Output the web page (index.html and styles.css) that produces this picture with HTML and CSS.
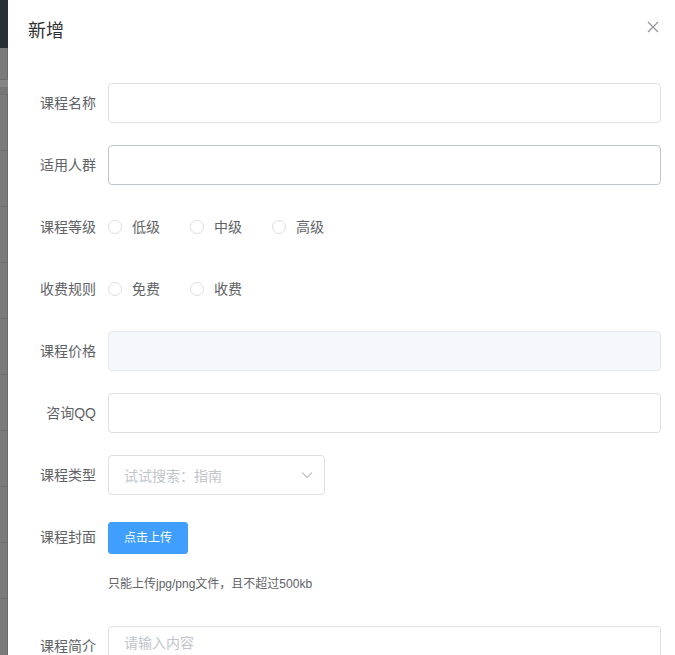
FILE: index.html
```html
<!DOCTYPE html>
<html lang="zh-CN">
<head>
<meta charset="utf-8">
<title>新增</title>
<link rel="stylesheet" href="styles.css">
</head>
<body>
<div class="backdrop">
  <div class="bd-head"></div>
  <div class="bd-row bd-r1"></div>
  <div class="bd-row bd-r2"></div>
  <div class="bd-row bd-r3"></div>
  <div class="bd-row"></div>
  <div class="bd-row"></div>
  <div class="bd-row"></div>
  <div class="bd-row"></div>
  <div class="bd-row"></div>
  <div class="bd-row"></div>
  <div class="bd-row"></div>
  <div class="bd-row"></div>
  <div class="bd-row"></div>
</div>
<div class="dialog">
  <div class="dialog-header">
    <span class="dialog-title">新增</span>
    <button class="dialog-close" aria-label="Close">
      <svg width="16" height="16" viewBox="0 0 16 16"><path d="M3 3 L13 13 M13 3 L3 13" stroke="#909399" stroke-width="1.2" fill="none"/></svg>
    </button>
  </div>
  <div class="dialog-body">
    <form class="form">
      <div class="form-item">
        <label class="form-label">课程名称</label>
        <div class="form-content"><div class="input"></div></div>
      </div>
      <div class="form-item">
        <label class="form-label">适用人群</label>
        <div class="form-content"><div class="input input-hover"></div></div>
      </div>
      <div class="form-item">
        <label class="form-label">课程等级</label>
        <div class="form-content radios">
          <span class="radio"><span class="radio-dot"></span><span class="radio-label">低级</span></span>
          <span class="radio"><span class="radio-dot"></span><span class="radio-label">中级</span></span>
          <span class="radio"><span class="radio-dot"></span><span class="radio-label">高级</span></span>
        </div>
      </div>
      <div class="form-item">
        <label class="form-label">收费规则</label>
        <div class="form-content radios">
          <span class="radio"><span class="radio-dot"></span><span class="radio-label">免费</span></span>
          <span class="radio"><span class="radio-dot"></span><span class="radio-label">收费</span></span>
        </div>
      </div>
      <div class="form-item">
        <label class="form-label">课程价格</label>
        <div class="form-content"><div class="input input-disabled"></div></div>
      </div>
      <div class="form-item">
        <label class="form-label">咨询QQ</label>
        <div class="form-content"><div class="input"></div></div>
      </div>
      <div class="form-item">
        <label class="form-label">课程类型</label>
        <div class="form-content">
          <div class="select">
            <span class="placeholder">试试搜索：指南</span>
            <svg class="select-arrow" width="12" height="8" viewBox="0 0 12 8"><path d="M1 1.5 L6 6.5 L11 1.5" stroke="#c0c4cc" stroke-width="1.2" fill="none"/></svg>
          </div>
        </div>
      </div>
      <div class="form-item">
        <label class="form-label">课程封面</label>
        <div class="form-content">
          <div class="upload-row"><span class="btn-primary">点击上传</span></div>
          <div class="upload-tip">只能上传jpg/png文件，且不超过500kb</div>
        </div>
      </div>
      <div class="form-item">
        <label class="form-label">课程简介</label>
        <div class="form-content"><div class="textarea"><span class="placeholder">请输入内容</span></div></div>
      </div>
    </form>
  </div>
</div>
</body>
</html>
```

FILE: styles.css
```css
html, body {
  margin: 0;
  padding: 0;
  height: 100%;
  overflow: hidden;
}
body {
  display: flex;
  align-items: flex-start;
  background: #7b7b7b;
  font-family: "Liberation Sans", "Noto Sans CJK SC", sans-serif;
  color: #606266;
}
.backdrop {
  width: 8px;
  flex: none;
  height: 655px;
  overflow: hidden;
  background: #7b7b7b;
  box-shadow: inset -1px 0 0 #6a6a6a;
}
.bd-head {
  height: 48px;
  background: #2a2e35;
}
.bd-row {
  height: 55px;
  border-bottom: 1px solid #6e6e6e;
}
.bd-r1 {
  height: 31px;
}
.bd-r2 {
  height: 7px;
  background: #858585;
  border-bottom: none;
}
.bd-r3 {
  height: 7px;
  background: #767676;
}
.dialog {
  flex: none;
  width: 673px;
  height: 656px;
  overflow: hidden;
  margin-top: -1px;
  background: #fff;
  position: relative;
}
.dialog-header {
  padding: 20px 20px 10px;
}
.dialog-title {
  font-size: 18px;
  line-height: 24px;
  color: #303133;
}
.dialog-close {
  position: absolute;
  top: 20px;
  right: 20px;
  width: 16px;
  height: 16px;
  padding: 0;
  border: none;
  background: transparent;
}
.dialog-close svg {
  display: block;
}
.dialog-body {
  padding: 30px 20px 0;
}
.form-item {
  display: flex;
  margin-bottom: 22px;
}
.form-label {
  width: 80px;
  flex: none;
  box-sizing: border-box;
  padding-right: 12px;
  text-align: right;
  font-size: 14px;
  line-height: 40px;
  color: #606266;
}
.form-content {
  flex: 1;
  min-width: 0;
}
.input {
  height: 40px;
  box-sizing: border-box;
  border: 1px solid #dcdfe6;
  border-radius: 4px;
  background: #fff;
}
.input-hover {
  border-color: #c0c4cc;
}
.input-disabled {
  background: #f5f7fa;
  border-color: #e4e7ed;
}
.radios {
  display: flex;
  align-items: center;
  height: 40px;
}
.radio {
  display: inline-flex;
  align-items: center;
  margin-right: 30px;
}
.radio-dot {
  width: 14px;
  height: 14px;
  box-sizing: border-box;
  border: 1px solid #dcdfe6;
  border-radius: 50%;
  background: #fff;
}
.radio-label {
  padding-left: 10px;
  font-size: 14px;
  line-height: 20px;
  color: #606266;
}
.select {
  width: 217px;
  height: 40px;
  box-sizing: border-box;
  border: 1px solid #dcdfe6;
  border-radius: 4px;
  display: flex;
  align-items: center;
  justify-content: space-between;
  padding: 0 11px 0 15px;
}
.placeholder {
  font-size: 14px;
  color: #c0c4cc;
}
.select-arrow {
  display: block;
}
.upload-row {
  height: 40px;
  box-sizing: border-box;
  padding-top: 5px;
}
.btn-primary {
  display: inline-block;
  box-sizing: border-box;
  height: 32px;
  padding: 9px 15px;
  font-size: 12px;
  line-height: 12px;
  color: #fff;
  background: #409eff;
  border: 1px solid #409eff;
  border-radius: 3px;
}
.upload-tip {
  margin-top: 7px;
  font-size: 12px;
  line-height: 40px;
  color: #606266;
}
.textarea {
  height: 54px;
  box-sizing: border-box;
  border: 1px solid #dcdfe6;
  border-radius: 4px;
  padding: 5px 15px;
  line-height: 21px;
}
```
